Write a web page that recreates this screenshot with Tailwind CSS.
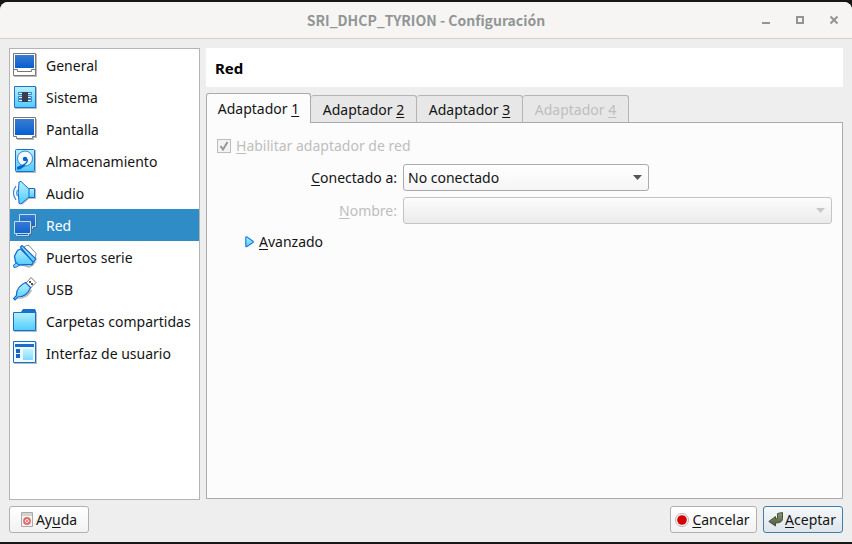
<!DOCTYPE html>
<html lang="es">
<head>
<meta charset="utf-8">
<meta name="viewport" content="width=device-width, initial-scale=1">
<title>SRI_DHCP_TYRION - Configuración</title>
<script src="https://cdn.jsdelivr.net/npm/@tailwindcss/browser@4"></script>
</head>
<body class="flex h-screen flex-col bg-[#171717] py-0.5 font-['Noto_Sans',sans-serif] text-[14px] leading-5 text-[#141414]">
<svg class="absolute size-0" aria-hidden="true">
  <defs>
    <linearGradient id="cy" x1="0" y1="0" x2="0" y2="1"><stop offset="0" stop-color="#b5f0ff"/><stop offset="1" stop-color="#4fccff"/></linearGradient>
    <linearGradient id="bl" x1="0" y1="0" x2="0" y2="1"><stop offset="0" stop-color="#3a7bd0"/><stop offset="1" stop-color="#0560d2"/></linearGradient>
    <linearGradient id="gr" x1="0" y1="0" x2="0" y2="1"><stop offset="0" stop-color="#8b9a74"/><stop offset="1" stop-color="#4a573c"/></linearGradient>
  </defs>
</svg>
<div class="flex min-h-0 flex-1 flex-col overflow-hidden rounded-t-lg bg-[#eeeeee]">
  <header class="grid h-[37px] shrink-0 grid-cols-[1fr_auto_1fr] items-center border-b border-[#d8d0c8] bg-[#f6f5f4] text-[#929595]">
    <h1 class="col-start-2 font-['Noto_Sans_CJK_SC','Noto_Sans',sans-serif] font-bold">SRI_DHCP_TYRION - Configuración</h1>
    <div class="flex justify-end gap-2 pr-[5px]">
      <button class="grid size-[26px] place-items-center" aria-label="Minimizar"><svg width="10" height="10" class="fill-current"><path d="M1 7h8v2H1z"/></svg></button>
      <button class="grid size-[26px] place-items-center" aria-label="Maximizar"><svg width="10" height="10" fill="none" stroke="currentColor" stroke-width="2"><path d="M2 2h6v6H2z"/></svg></button>
      <button class="grid size-[26px] place-items-center" aria-label="Cerrar"><svg width="10" height="10" fill="none" stroke="currentColor" stroke-width="2"><path d="M1.500 1.500l7 7M8.500 1.500l-7 7"/></svg></button>
    </div>
  </header>

  <main class="grid min-h-0 flex-1 grid-cols-[191px_1fr] gap-x-1.5 px-[9px] pt-[9px]">
    <nav class="border border-[#b4b4b4] bg-white" aria-label="Categorías">
      <ul class="whitespace-nowrap">
        <li><a href="#general" class="flex h-8 items-center gap-[9px] pl-[3px]">
          <svg width="24" height="24" viewBox="0 0 24 24" class="shrink-0"><path d="M1 1h23v23H1z" fill="#bbb"/><path d="M.5.500h22v22H.5z" fill="#fff" stroke="#777"/><path d="M2 2h19v13H2z" fill="url(#bl)"/><path d="M0 16.500h4.500v2h14v-2H23" fill="none" stroke="#777"/></svg>
          <span class="pt-0.5">General</span></a></li>
        <li><a href="#sistema" class="flex h-8 items-center gap-[9px] pl-[3px]">
          <svg width="24" height="24" viewBox="0 0 24 24" class="shrink-0"><path d="M2 2h22v22H2z" fill="#bbb"/><path d="M1.500 1.500h21v21h-21z" fill="url(#cy)" stroke="#2a70c4"/><path d="M5.500 7.500h13v2h-13zM5.500 11.500h13v2h-13zM5.500 14.500h13v2h-13z" fill="#e8faff" stroke="#347eba"/><path d="M9 7h6v10H9z" fill="#3b3d4c"/></svg>
          <span class="pt-0.5">Sistema</span></a></li>
        <li><a href="#pantalla" class="flex h-8 items-center gap-[9px] pl-[3px]">
          <svg width="24" height="24" viewBox="0 0 24 24" class="shrink-0"><path d="M1 2h23v19h-3v2H4z" fill="#bbb"/><path d="M.5.500h22v19h-3v2h-16v-2h-3z" fill="#fff" stroke="#777"/><path d="M2 2h19v16H2z" fill="url(#bl)"/></svg>
          <span class="pt-0.5">Pantalla</span></a></li>
        <li><a href="#almacenamiento" class="flex h-8 items-center gap-[9px] pl-[3px]">
          <svg width="24" height="24" viewBox="0 0 24 24" class="shrink-0"><path d="M3 1h20v23H3z" fill="#bbb"/><rect x="2.500" y=".5" width="19" height="22" rx="1" fill="url(#cy)" stroke="#176fd0"/><circle cx="12" cy="9.500" r="7.500" fill="#f4fcff" stroke="#3a80ce"/><circle cx="12" cy="10" r="2.200" fill="#0a63cb"/><path d="M13 9q3 3-1 6l-2 2" fill="none" stroke="#0a63cb" stroke-width="1.500"/><path d="M4 18l7-3 1 2-5 3.500H4z" fill="#0a63cb"/></svg>
          <span class="pt-0.5">Almacenamiento</span></a></li>
        <li><a href="#audio" class="flex h-8 items-center gap-[9px] pl-[3px]">
          <svg width="24" height="24" viewBox="0 0 24 24" class="shrink-0"><path d="M7 2l9 6h7v10h-7l-7 6z" fill="#bbb"/><path d="M15.500 7.500h6v9h-6z" fill="url(#cy)" stroke="#1769cf"/><path d="M6 1Q4.500 12 6 22.500L8 23l8-7V8L8 .5z" fill="url(#cy)" stroke="#1769cf"/><path d="M4.500 9q-1.500 3 0 6M3 5q-5 7 0 14" fill="none" stroke="#3188e2" stroke-width="1.200"/></svg>
          <span class="pt-0.5">Audio</span></a></li>
        <li><a href="#red" aria-current="page" class="flex h-8 items-center gap-[9px] bg-[#308cc6] pl-[3px] text-white">
          <svg width="24" height="24" viewBox="0 0 24 24" class="shrink-0"><path d="M7 2h17v13h-3v2H7z" fill="#49718b"/><path d="M6.500 1.500h16v12h-3v2h-10v-2h-3z" fill="url(#bl)" stroke="#c5dceb"/><path d="M2 9h17v13h-2v2H4z" fill="#49718b"/><path d="M1.500 8.500h16v12h-2v2h-12v-2h-2z" fill="url(#bl)" stroke="#c5dceb"/><path d="M3 20.500h13" stroke="#c5dceb"/></svg>
          <span class="pt-0.5">Red</span></a></li>
        <li><a href="#puertos" class="flex h-8 items-center gap-[9px] pl-[3px]">
          <svg width="24" height="24" viewBox="0 0 24 24" class="shrink-0"><path d="M11 2l2.500-1.500h2.500l7 8-.5 4-1.500.5z" fill="#fff" stroke="#888"/><path d="M7 20l10 1 2-3 5-2-4 5-4 2z" fill="#bbb"/><path d="M1.500 11l3-5.500 3-1.500 13 12.500-1.500 3-13.500.5-3-3z" fill="url(#cy)" stroke="#1769cf" stroke-width="1.300"/><path d="M7.500 2l1.500-1.500L23 14l-2 2.500-2-.5z" fill="url(#cy)" stroke="#1769cf" stroke-width="1.200"/><path d="M3.500 18l2.500 2.500L3.500 22 1 22.500.500 20z" fill="#7edcff" stroke="#1769cf"/></svg>
          <span class="pt-0.5">Puertos serie</span></a></li>
        <li><a href="#usb" class="flex h-8 items-center gap-[9px] pl-[3px]">
          <svg width="24" height="24" viewBox="0 0 24 24" class="shrink-0"><path d="M13 6l5-5.500 5 5-6 6z" fill="#fff" stroke="#777"/><path d="M16 4h2v2h-2zM18 6h2v2h-2z" fill="#555"/><path d="M4 21q9 0 14-9l1 2q-5 8-13 8z" fill="#bbb"/><path d="M3.500 18.500Q3 10 12.500 5.500l5 5Q14 20 5 20l-3 3-1.500-1.500z" fill="url(#cy)" stroke="#1769cf" stroke-width="1.200"/></svg>
          <span class="pt-0.5">USB</span></a></li>
        <li><a href="#carpetas" class="flex h-8 items-center gap-[9px] pl-[3px]">
          <svg width="24" height="24" viewBox="0 0 24 24" class="shrink-0"><path d="M1 3h23v20H1z" fill="#bbb"/><path d="M8 3l2-3h12l1 2v2H8z" fill="#176fd0"/><path d="M.5 3.500h22v18H.5z" fill="url(#cy)" stroke="#176fd0"/></svg>
          <span class="pt-0.5">Carpetas compartidas</span></a></li>
        <li><a href="#interfaz" class="flex h-8 items-center gap-[9px] pl-[3px]">
          <svg width="24" height="24" viewBox="0 0 24 24" class="shrink-0"><path d="M1 1h23v22H1z" fill="#bbb"/><path d="M.5.500h22v21H.5z" fill="#eefaff" stroke="#176fd0"/><path d="M2 3h19v3H2z" fill="#1b6ccd"/><path d="M3 8h4v4H3zM3 13h4v4H3z" fill="#1763c8"/><path d="M10 8h10v11H10z" fill="url(#cy)" fill-opacity=".7"/></svg>
          <span class="pt-0.5">Interfaz de usuario</span></a></li>
      </ul>
    </nav>

    <section class="flex min-w-0 flex-col">
      <h2 class="flex h-[39px] items-center bg-white px-[9px] text-[15px] font-bold text-black">Red</h2>
      <div class="relative z-10 mt-[6px] -mb-px flex h-[30px] items-end" role="tablist">
        <button role="tab" aria-selected="true" class="h-[30px] w-[105px] rounded-t-[3px] border border-b-0 border-[#ababab] bg-[#fcfcfc]">Adaptador <span class="underline decoration-1 underline-offset-2">1</span></button>
        <button role="tab" aria-selected="false" class="h-7 w-[106px] rounded-t-[3px] border border-l-0 border-[#b4b4b4] border-b-[#ababab] bg-[#e7e7e7] pt-0.5">Adaptador <span class="underline decoration-1 underline-offset-2">2</span></button>
        <button role="tab" aria-selected="false" class="h-7 w-[106px] rounded-t-[3px] border border-l-0 border-[#b4b4b4] border-b-[#ababab] bg-[#e7e7e7] pt-0.5">Adaptador <span class="underline decoration-1 underline-offset-2">3</span></button>
        <button role="tab" aria-selected="false" disabled class="h-7 w-[106px] rounded-t-[3px] border border-l-0 border-[#b4b4b4] border-b-[#ababab] bg-[#e7e7e7] pt-0.5 text-[#bebebe]">Adaptador <span class="underline decoration-1 underline-offset-2">4</span></button>
      </div>
      <div role="tabpanel" class="mb-px flex-1 border border-[#ababab] bg-[#fcfcfc] px-[10px] pt-[13px]">
        <label class="flex h-5 items-center gap-[5px] text-[#bebebe]">
          <span class="grid size-[14px] place-items-center">
            <input type="checkbox" checked disabled class="col-start-1 row-start-1 size-[14px] appearance-none border border-[#bcbcbc] bg-[#f3f3f3]">
            <svg width="14" height="14" class="col-start-1 row-start-1" fill="none" stroke="#979797" stroke-width="2"><path d="M3.500 7l2.500 3.500L10.500 3"/></svg>
          </span>
          <span><span class="underline decoration-1 underline-offset-2">H</span>abilitar adaptador de red</span>
        </label>
        <div class="mt-2 grid grid-cols-[180px_1fr] items-center gap-x-1.5 gap-y-1.5">
          <label for="conn" class="text-right"><span class="underline decoration-1 underline-offset-2">C</span>onectado a:</label>
          <div class="grid w-[246px] items-center">
            <select id="conn" class="col-start-1 row-start-1 h-[27px] appearance-none rounded-[3px] border border-[#ababab] bg-linear-to-b from-white to-[#f5f5f5] pl-1"><option>No conectado</option></select>
            <svg width="9" height="5" class="pointer-events-none col-start-1 row-start-1 mr-[7px] justify-self-end"><path d="M0 0h9L4.500 5z" fill="#555"/></svg>
          </div>
          <label for="name" class="text-right text-[#bebebe]"><span class="underline decoration-1 underline-offset-2">N</span>ombre:</label>
          <div class="grid items-center">
            <select id="name" disabled class="col-start-1 row-start-1 h-[27px] appearance-none rounded-[3px] border border-[#c4c4c4] bg-linear-to-b from-[#fcfcfc] to-[#ebebeb] pl-1"></select>
            <svg width="9" height="5" class="pointer-events-none col-start-1 row-start-1 mr-[7px] justify-self-end"><path d="M0 0h9L4.500 5z" fill="#c8c8c8"/></svg>
          </div>
        </div>
        <button class="mt-2 ml-7 flex items-center gap-[5px]" aria-expanded="false">
          <svg width="9" height="12"><path d="M.8 1.500Q.8.500 2 1l6 4.200q.8.600 0 1.200L2 10.500q-1.200.5-1.200-.5z" fill="url(#cy)" stroke="#1f7ee0" stroke-width="1.200"/></svg>
          <span><span class="underline decoration-1 underline-offset-2">A</span>vanzado</span>
        </button>
      </div>
    </section>
  </main>

  <footer class="flex shrink-0 gap-1.5 px-[9px] pt-1.5 pb-[9px]">
    <button class="mr-auto flex h-[27px] w-20 items-center justify-center gap-[3px] rounded-[3px] border border-[#b0b0b0] bg-linear-to-b from-white to-[#f2f2f2]">
      <svg width="12" height="15"><path d="M.5.500h11v14H.5z" fill="#f4f4f2" stroke="#aaa"/><path d="M1 1h10v3H1z" fill="#d3d3cf"/><circle cx="6" cy="9" r="3" fill="none" stroke="#df6f6f" stroke-width="1.800"/><path d="M3 6l6 6M9 6l-6 6" stroke="#d66" stroke-width=".8"/></svg>
      <span>Ay<span class="underline decoration-1 underline-offset-2">u</span>da</span>
    </button>
    <button class="flex h-[27px] w-[87px] items-center justify-center gap-[3px] rounded-[3px] border border-[#b0b0b0] bg-linear-to-b from-white to-[#f2f2f2] pr-0.5">
      <svg width="14" height="14"><circle cx="7" cy="7" r="6.500" fill="#f4f4f4" stroke="#b7b7b7"/><circle cx="7" cy="7" r="4.800" fill="#d60000"/></svg>
      <span><span class="underline decoration-1 underline-offset-2">C</span>ancelar</span>
    </button>
    <button class="flex h-[27px] w-20 items-center justify-center gap-px rounded-[3px] border border-[#3d7fa8] bg-linear-to-b from-[#f6f8fa] to-[#dde5eb] pr-0.5">
      <svg width="16" height="16"><path d="M9.500 1.500l5-1v6q0 4.500-7 4.500v3L.8 9.500 7.500 4.500v2.500q2.500 0 2-2z" fill="url(#gr)" stroke="#46523c"/></svg>
      <span><span class="underline decoration-1 underline-offset-2">A</span>ceptar</span>
    </button>
  </footer>
</div>
</body>
</html>
